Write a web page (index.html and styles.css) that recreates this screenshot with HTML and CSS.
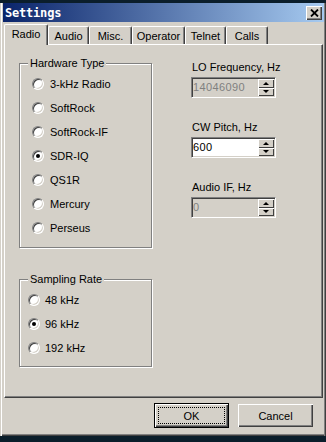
FILE: index.html
```html
<!doctype html>
<html lang="en">
  <head>
    <meta charset="UTF-8" />
    <meta name="viewport" content="width=device-width, initial-scale=1.0" />
    <title>Settings</title>
    <link rel="stylesheet" href="styles.css">
  </head>
  <body>
    <div class="window">
      <div class="titlebar">
        <span class="title">Settings</span>
        <div class="close">
          <svg width="9" height="8" viewBox="0 0 9 8">
            <path d="M1 0.5 L8 7.5 M8 0.5 L1 7.5" stroke="#000" stroke-width="1.8" />
          </svg>
        </div>
      </div>

      <div class="tabs">
        <div class="tab active w-radio">Radio</div>
        <div class="tab w-audio">Audio</div>
        <div class="tab w-misc">Misc.</div>
        <div class="tab w-operator">Operator</div>
        <div class="tab w-telnet">Telnet</div>
        <div class="tab w-calls">Calls</div>
      </div>

      <div class="panel">
        <div class="col-left">
          <div class="group hardware">
            <div class="group-title">Hardware Type</div>
            <div class="radio"><span class="dot"></span>3-kHz Radio</div>
            <div class="radio"><span class="dot"></span>SoftRock</div>
            <div class="radio"><span class="dot"></span>SoftRock-IF</div>
            <div class="radio"><span class="dot on"></span>SDR-IQ</div>
            <div class="radio"><span class="dot"></span>QS1R</div>
            <div class="radio"><span class="dot"></span>Mercury</div>
            <div class="radio"><span class="dot"></span>Perseus</div>
          </div>

          <div class="group sampling">
            <div class="group-title">Sampling Rate</div>
            <div class="radio"><span class="dot"></span>48 kHz</div>
            <div class="radio"><span class="dot on"></span>96 kHz</div>
            <div class="radio"><span class="dot"></span>192 kHz</div>
          </div>
        </div>

        <div class="col-right">
          <div class="field">
            <div class="field-label">LO Frequency, Hz</div>
            <div class="spin disabled">
              <span class="value">14046090</span>
              <div class="spin-btns">
                <span class="spin-btn up"></span>
                <span class="spin-btn down"></span>
              </div>
            </div>
          </div>

          <div class="field">
            <div class="field-label">CW Pitch, Hz</div>
            <div class="spin">
              <span class="value">600</span>
              <div class="spin-btns">
                <span class="spin-btn up"></span>
                <span class="spin-btn down"></span>
              </div>
            </div>
          </div>

          <div class="field">
            <div class="field-label">Audio IF, Hz</div>
            <div class="spin disabled">
              <span class="value">0</span>
              <div class="spin-btns">
                <span class="spin-btn up"></span>
                <span class="spin-btn down"></span>
              </div>
            </div>
          </div>
        </div>
      </div>

      <div class="actions">
        <div class="btn default"><span class="focus">OK</span></div>
        <div class="btn">Cancel</div>
      </div>
    </div>
  </body>
</html>
```

FILE: styles.css
```css
body {
  margin: 0;
  padding-top: 3px;
  background: #0b1e2b;
  color: #000;
  font-family: "Liberation Sans", Arial, sans-serif;
  font-size: 11px;
}
.window {
  width: 326px;
  height: 433px;
  box-sizing: border-box;
  padding: 0 2px 0 3px;
  background: #d4d0c8;
  box-shadow:
    inset 1px 0 #d4d0c8,
    inset 2px 0 #fff,
    inset -1px 0 #404040,
    inset -2px 0 #808080,
    inset 0 -1px #404040,
    inset 0 -2px #808080;
  display: flex;
  flex-direction: column;
}
.titlebar {
  height: 19px;
  flex: none;
  padding: 0 2px;
  display: flex;
  align-items: center;
  justify-content: space-between;
  background: linear-gradient(to right, #0a246a, #a6caf0);
}
.title {
  color: #fff;
  font-family: "DejaVu Sans Mono", monospace;
  font-weight: bold;
  font-size: 12px;
  letter-spacing: -0.2px;
}
.close {
  width: 16px;
  height: 14px;
  box-sizing: border-box;
  background: #d4d0c8;
  box-shadow:
    inset 1px 1px #fff,
    inset -1px -1px #404040,
    inset -2px -2px #808080;
  display: flex;
  align-items: center;
  justify-content: center;
  margin-top: 1px;
}

/* tab strip */
.tabs {
  height: 22px;
  flex: none;
  padding-left: 1px;
  display: flex;
  align-items: flex-end;
}
.tab {
  height: 18px;
  box-sizing: border-box;
  border-top: 1px solid #fff;
  border-left: 1px solid #fff;
  border-right: 1px solid #404040;
  border-radius: 2px 2px 0 0;
  box-shadow: inset -1px 0 #808080;
  display: flex;
  align-items: center;
  justify-content: center;
  padding-top: 1px;
}
.tab.active {
  height: 21px;
  margin-bottom: -1px;
  position: relative;
  z-index: 1;
  background: #d4d0c8;
  padding-top: 0;
  padding-bottom: 2px;
}
.w-radio { width: 44px; }
.w-audio { width: 41px; }
.w-misc { width: 43px; }
.w-operator { width: 53px; }
.w-telnet { width: 41px; }
.w-calls { width: 42px; }

.panel {
  height: 354px;
  flex: none;
  margin: 0 1px;
  box-sizing: border-box;
  border-top: 1px solid #fff;
  border-left: 1px solid #fff;
  border-right: 1px solid #404040;
  border-bottom: 1px solid #404040;
  box-shadow: inset -1px -1px #808080;
  display: flex;
}
.col-left {
  padding: 18px 0 0 14px;
}
.col-right {
  margin-left: 39px;
  padding-top: 16px;
}

/* group boxes */
.group {
  width: 133px;
  box-sizing: border-box;
  border: 1px solid #808080;
  box-shadow: 1px 1px #fff, inset 1px 1px #fff;
}
.group-title {
  width: max-content;
  margin: -7px 0 2px 8px;
  padding: 0 2px;
  line-height: 13px;
  background: #d4d0c8;
}
.hardware {
  padding-bottom: 7px;
}
.hardware .radio {
  padding-left: 12px;
  gap: 6px;
}
.sampling {
  margin-top: 31px;
  padding-bottom: 6px;
}
.sampling .radio {
  padding-left: 8px;
  gap: 5px;
}
.radio {
  height: 24px;
  display: flex;
  align-items: center;
}
.dot {
  width: 12px;
  height: 12px;
  flex: none;
  box-sizing: border-box;
  border-radius: 50%;
  border: 1px solid;
  border-color: #808080 #fff #fff #808080;
  box-shadow: inset 1px 1px #404040, inset -1px -1px #d4d0c8;
  background: #fff;
  display: flex;
  align-items: center;
  justify-content: center;
}
.dot.on::after {
  content: "";
  width: 4px;
  height: 4px;
  border-radius: 50%;
  background: #000;
}

/* spin edits */
.field {
  margin-bottom: 23px;
}
.field-label {
  line-height: 13px;
  margin: 0 0 3px 1px;
}
.spin {
  width: 85px;
  height: 21px;
  box-sizing: border-box;
  padding: 1px;
  border: 1px solid;
  border-color: #808080 #fff #fff #808080;
  box-shadow: inset 1px 1px #404040, inset -1px -1px #d4d0c8;
  background: #fff;
  display: flex;
}
.spin.disabled {
  background: #d4d0c8;
  color: #808080;
}
.value {
  flex: 1;
  line-height: 17px;
  letter-spacing: 0.4px;
}
.spin-btns {
  width: 16px;
  display: flex;
  flex-direction: column;
}
.spin-btn {
  flex: 1;
  background: #d4d0c8;
  box-shadow:
    inset 1px 1px #fff,
    inset -1px -1px #404040;
  display: flex;
  align-items: center;
  justify-content: center;
}
.spin-btn.up::after {
  content: "";
  border-left: 3px solid transparent;
  border-right: 3px solid transparent;
  border-bottom: 3px solid #000;
}
.spin-btn.down::after {
  content: "";
  border-left: 3px solid transparent;
  border-right: 3px solid transparent;
  border-top: 3px solid #000;
}

/* dialog buttons */
.actions {
  display: flex;
  justify-content: flex-end;
  align-items: center;
  gap: 9px;
  padding: 5px 11px 0 0;
}
.btn {
  width: 75px;
  height: 23px;
  box-sizing: border-box;
  padding: 2px;
  background: #d4d0c8;
  box-shadow:
    inset 1px 1px #fff,
    inset -1px -1px #404040,
    inset -2px -2px #808080;
  display: flex;
  align-items: center;
  justify-content: center;
}
.btn.default {
  height: 25px;
  border: 1px solid #000;
  align-items: stretch;
}
.focus {
  flex: 1;
  margin: 1px;
  border: 1px dotted #000;
  display: flex;
  align-items: center;
  justify-content: center;
}
```
